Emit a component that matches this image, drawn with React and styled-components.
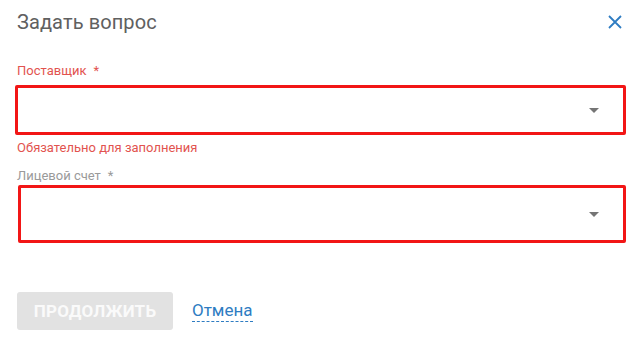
import React from 'react';
import styled, {createGlobalStyle} from 'styled-components';

const GlobalStyle = createGlobalStyle`
    html, body {
        margin: 0;
        padding: 0;
        background: #ffffff;
        font-family: Roboto, "Noto Sans", Arial, sans-serif;
    }
`;

const Dialog = styled.div`
    width: 640px;
    height: 345px;
    box-sizing: border-box;
    padding: 0 14px 0 17px;
    display: flex;
    flex-direction: column;
`;

const Header = styled.div`
    display: flex;
    align-items: center;
    justify-content: space-between;
    height: 24px;
    margin-top: 10px;
`;

const Title = styled.h2`
    margin: 0;
    font-size: 20px;
    line-height: 24px;
    font-weight: 400;
    letter-spacing: 0.1px;
    color: #606060;
`;

const CloseButton = styled.button`
    border: 0;
    background: none;
    padding: 0;
    width: 16px;
    height: 16px;
    margin-right: 3px;
    cursor: pointer;
    display: flex;
`;

const Label = styled.div`
    font-size: 13px;
    line-height: 15px;
    color: ${(p) => (p.$error ? '#e2534f' : '#9a9a9a')};
    margin-top: ${(p) => p.$top}px;
    & span {
        margin-left: 7px;
    }
`;

const Select = styled.div`
    box-sizing: border-box;
    height: ${(p) => p.$height}px;
    margin-top: ${(p) => p.$top}px;
    margin-left: ${(p) => p.$shift}px;
    border: 3px solid #f21616;
    border-radius: 2px;
    display: flex;
    align-items: center;
    justify-content: flex-end;
    padding-right: 24px;
`;

const Arrow = styled.div`
    width: 0;
    height: 0;
    border-left: 5px solid transparent;
    border-right: 5px solid transparent;
    border-top: 5px solid #757575;
`;

const ErrorText = styled.div`
    font-size: 13px;
    line-height: 15px;
    color: #e2534f;
    margin-top: 5px;
`;

const Actions = styled.div`
    display: flex;
    align-items: center;
    gap: 19px;
    margin-top: 49px;
`;

const PrimaryButton = styled.button`
    width: 156px;
    height: 38px;
    border: 0;
    border-radius: 3px;
    background: #e2e2e2;
    color: #fafafa;
    font-family: Roboto, Arial, sans-serif;
    font-size: 17px;
    font-weight: 700;
    letter-spacing: 0.2px;
`;

const CancelLink = styled.a`
    font-size: 17px;
    line-height: 20px;
    color: #2e7cc2;
    text-decoration: none;
    border-bottom: 1px dashed #2e7cc2;
    padding-bottom: 1px;
    cursor: pointer;
`;

export default function App() {
    return (
        <>
            <GlobalStyle />
            <Dialog>
                <Header>
                    <Title>Задать вопрос</Title>
                    <CloseButton aria-label="close">
                        <svg width="16" height="16" viewBox="0 0 16 16">
                            <path d="M2 2 L14 14 M14 2 L2 14" stroke="#2e7cc2" strokeWidth="1.8" fill="none" />
                        </svg>
                    </CloseButton>
                </Header>
                <Label $error $top={29}>Поставщик<span>*</span></Label>
                <Select $height={50} $top={7} $shift={-2}>
                    <Arrow />
                </Select>
                <ErrorText>Обязательно для заполнения</ErrorText>
                <Label $top={13}>Лицевой счет<span>*</span></Label>
                <Select $height={58} $top={2} $shift={1}>
                    <Arrow />
                </Select>
                <Actions>
                    <PrimaryButton disabled>ПРОДОЛЖИТЬ</PrimaryButton>
                    <CancelLink>Отмена</CancelLink>
                </Actions>
            </Dialog>
        </>
    );
}
